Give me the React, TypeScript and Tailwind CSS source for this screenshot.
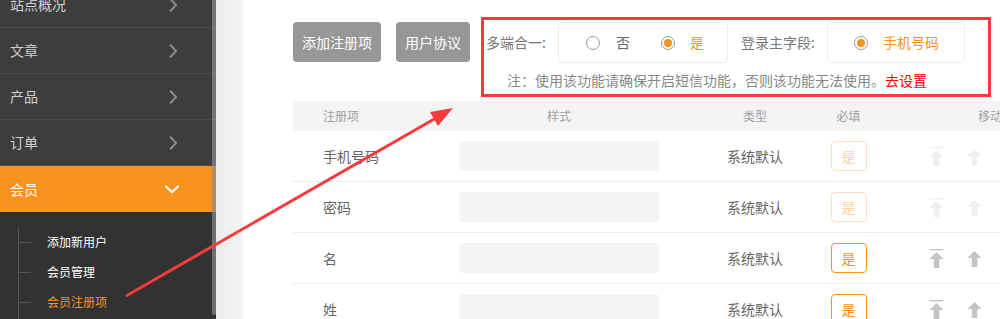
import React from 'react'

const menu = ['站点概况', '文章', '产品', '订单']

const rows = [
  { name: '手机号码', locked: true },
  { name: '密码', locked: true },
  { name: '名', locked: false },
  { name: '姓', locked: false },
]

function ChevronRight() {
  return (
    <svg width="10" height="16" viewBox="0 0 10 16" fill="none">
      <path d="M2 1.5 L8 8 L2 14.5" stroke="#8a8a8a" strokeWidth="2" />
    </svg>
  )
}

function ChevronDown() {
  return (
    <svg width="16" height="10" viewBox="0 0 16 10" fill="none">
      <path d="M1.5 2 L8 8 L14.5 2" stroke="#ffffff" strokeWidth="2.2" />
    </svg>
  )
}

function Radio({ checked }: { checked?: boolean }) {
  return (
    <span className="flex h-[14px] w-[14px] shrink-0 items-center justify-center rounded-full border border-[#9a9a9a] bg-white">
      {checked && <span className="h-[8px] w-[8px] rounded-full bg-[#f7931e]" />}
    </span>
  )
}

function ToTop({ color }: { color: string }) {
  return (
    <svg width="17" height="19" viewBox="0 0 17 19">
      <rect x="1.5" y="0" width="14" height="1.4" fill={color} />
      <path d="M8.5 3 L15.5 10 L11.3 10 L11.3 19 L5.7 19 L5.7 10 L1.5 10 Z" fill={color} />
    </svg>
  )
}

function Up({ color }: { color: string }) {
  return (
    <svg width="17" height="17" viewBox="0 0 17 17">
      <path d="M8.5 1 L15.5 8 L11.3 8 L11.3 17 L5.7 17 L5.7 8 L1.5 8 Z" fill={color} />
    </svg>
  )
}

export default function App() {
  return (
    <div
      className="relative flex h-[319px] w-[1000px] overflow-hidden bg-white"
      style={{ fontFamily: '"Microsoft YaHei", "Noto Sans CJK SC", sans-serif' }}
    >
      {/* Sidebar */}
      <div className="relative w-[216px] shrink-0 bg-[#323232]">
        <div className="mt-[-18px] bg-[#3d3d3d]">
          {menu.map((m) => (
            <div
              key={m}
              className="flex h-[46px] items-center justify-between border-b border-[#4a4a4a] pl-[10px] pr-[38px] text-[14px] text-[#cfcfcf]"
            >
              <span>{m}</span>
              <ChevronRight />
            </div>
          ))}
        </div>
        <div className="flex h-[46px] items-center justify-between bg-[#f7931e] pl-[10px] pr-[36px] text-[14px] text-white">
          <span>会员</span>
          <ChevronDown />
        </div>
        <div className="relative ml-[18px] mt-[15px] h-[200px] border-l border-[#555]">
          {['添加新用户', '会员管理', '会员注册项'].map((s, i) => (
            <div key={s} className="flex h-[30px] items-center">
              <span className="h-px w-[12px] bg-[#555]" />
              <span
                className={`ml-[16px] text-[12px] ${i === 2 ? 'text-[#f7931e]' : 'text-white'}`}
              >
                {s}
              </span>
            </div>
          ))}
        </div>
        {/* scrollbar */}
        <div className="absolute right-0 top-0 h-[315px] w-[4px] rounded-b bg-[#8a8a8a]/70" />
      </div>

      {/* gutter */}
      <div className="w-[27px] shrink-0 bg-gradient-to-r from-[#ececec] to-[#f3f3f3]" />

      {/* Main */}
      <div className="min-w-0 flex-1 pl-[50px] pt-[22px]">
        <div className="flex items-start">
          <button className="h-[40px] shrink-0 rounded-[4px] bg-[#979797] px-[9px] text-[14px] text-white">
            添加注册项
          </button>
          <button className="ml-[15px] h-[40px] shrink-0 rounded-[4px] bg-[#979797] px-[9px] text-[14px] text-white">
            用户协议
          </button>
          <div className="ml-[11px] mt-[-5px] h-[80px] w-[510px] shrink-0 border-[3px] border-[#f53b3b] pl-[2px] pt-[2px]">
            <div className="flex items-center whitespace-nowrap text-[14px] text-[#777]">
              <span className="w-[72px] shrink-0">多端合一:</span>
              <div className="flex h-[41px] w-[170px] shrink-0 items-center rounded-[4px] border border-[#ececec] pl-[27px]">
                <Radio />
                <span className="ml-[16px] text-[#666]">否</span>
                <span className="ml-[31px]"><Radio checked /></span>
                <span className="ml-[15px] text-[#f7931e]">是</span>
              </div>
              <span className="ml-[13px] shrink-0">登录主字段:</span>
              <div className="ml-[12px] flex h-[41px] w-[138px] shrink-0 items-center rounded-[4px] border border-[#ececec] pl-[26px]">
                <Radio checked />
                <span className="ml-[15px] text-[#f7931e]">手机号码</span>
              </div>
            </div>
            <div className="mt-[7px] whitespace-nowrap pl-[21px] text-[14px] text-[#888]">
              注：使用该功能请确保开启短信功能，否则该功能无法使用。
              <span className="text-[#ff0000]">去设置</span>
            </div>
          </div>
        </div>

        {/* Table */}
        <div className="mt-[4px] w-[760px]">
          <div className="flex h-[30px] items-center rounded-[4px] bg-[#f4f4f4] text-[12px] text-[#a0a0a0]">
            <span className="w-[116px] pl-[30px]">注册项</span>
            <span className="w-[300px] text-center">样式</span>
            <span className="w-[92px] text-center">类型</span>
            <span className="w-[95px] text-center">必填</span>
            <span className="pl-[82px]">移动</span>
          </div>
          {rows.map((r) => (
            <div key={r.name} className="flex h-[51px] items-center border-b border-[#ececec] text-[14px] text-[#666]">
              <span className="w-[116px] pl-[30px]">{r.name}</span>
              <div className="flex w-[300px] justify-center">
                <div className="h-[30px] w-[200px] rounded-[4px] bg-[#f4f4f4]" />
              </div>
              <span className="w-[92px] text-center">系统默认</span>
              <div className="flex w-[95px] justify-center">
                <span
                  className={`flex h-[30px] w-[36px] items-center justify-center rounded-[4px] border ${
                    r.locked ? 'border-[#fde0bd] text-[#fcd4a4]' : 'border-[#f7931e] text-[#f7931e]'
                  }`}
                >
                  是
                </span>
              </div>
              <div className="flex items-center gap-[21px] pl-[32px]">
                <ToTop color={r.locked ? '#efefef' : '#c4c4c4'} />
                <Up color={r.locked ? '#efefef' : '#c4c4c4'} />
              </div>
            </div>
          ))}
        </div>
      </div>

      {/* annotation arrow */}
      <svg className="pointer-events-none absolute left-0 top-0" width="1000" height="319">
        <line x1="126" y1="296" x2="436" y2="118" stroke="#f53b3b" strokeWidth="3" />
        <polygon points="453,108 438,126 430,112" fill="#f53b3b" />
      </svg>
    </div>
  )
}
